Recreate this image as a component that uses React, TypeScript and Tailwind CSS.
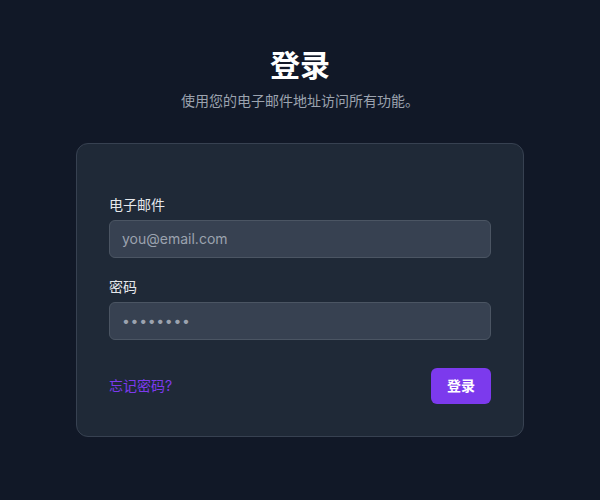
export default function App() {
  return (
    <div
      className="min-h-screen bg-[#111827] px-4 pt-[47px]"
      style={{ fontFamily: 'Inter, "Noto Sans CJK SC", sans-serif' }}
    >
      <div className="text-center">
        <h1 className="text-3xl font-bold text-white">登录</h1>
        <p className="mt-2 text-sm text-[#9ca3af]">使用您的电子邮件地址访问所有功能。</p>
      </div>
      <form className="mx-auto mt-8 w-[448px] rounded-xl border border-[#374151] bg-[#1f2937] px-8 pb-8 pt-[51px]">
        <div>
          <label className="block text-sm font-normal text-[#e5e7eb]">电子邮件</label>
          <input
            type="email"
            placeholder="you@email.com"
            className="mt-[5px] block w-full rounded-md border border-[#4b5563] bg-[#374151] px-3 py-2 text-sm text-white placeholder-[#9ca3af] outline-none"
          />
        </div>
        <div className="mt-[19px]">
          <label className="block text-sm font-normal text-[#e5e7eb]">密码</label>
          <input
            type="password"
            placeholder="••••••••"
            className="mt-[5px] block w-full rounded-md border border-[#4b5563] bg-[#374151] px-3 py-2 text-sm tracking-wider text-white placeholder-[#9ca3af] outline-none"
          />
        </div>
        <div className="mt-[28px] flex items-center justify-between">
          <a href="#" className="text-sm font-normal text-[#7c3aed]">忘记密码?</a>
          <button
            type="button"
            className="rounded-md bg-[#7c3aed] px-4 py-2 text-sm font-semibold text-white"
          >
            登录
          </button>
        </div>
      </form>
    </div>
  );
}
